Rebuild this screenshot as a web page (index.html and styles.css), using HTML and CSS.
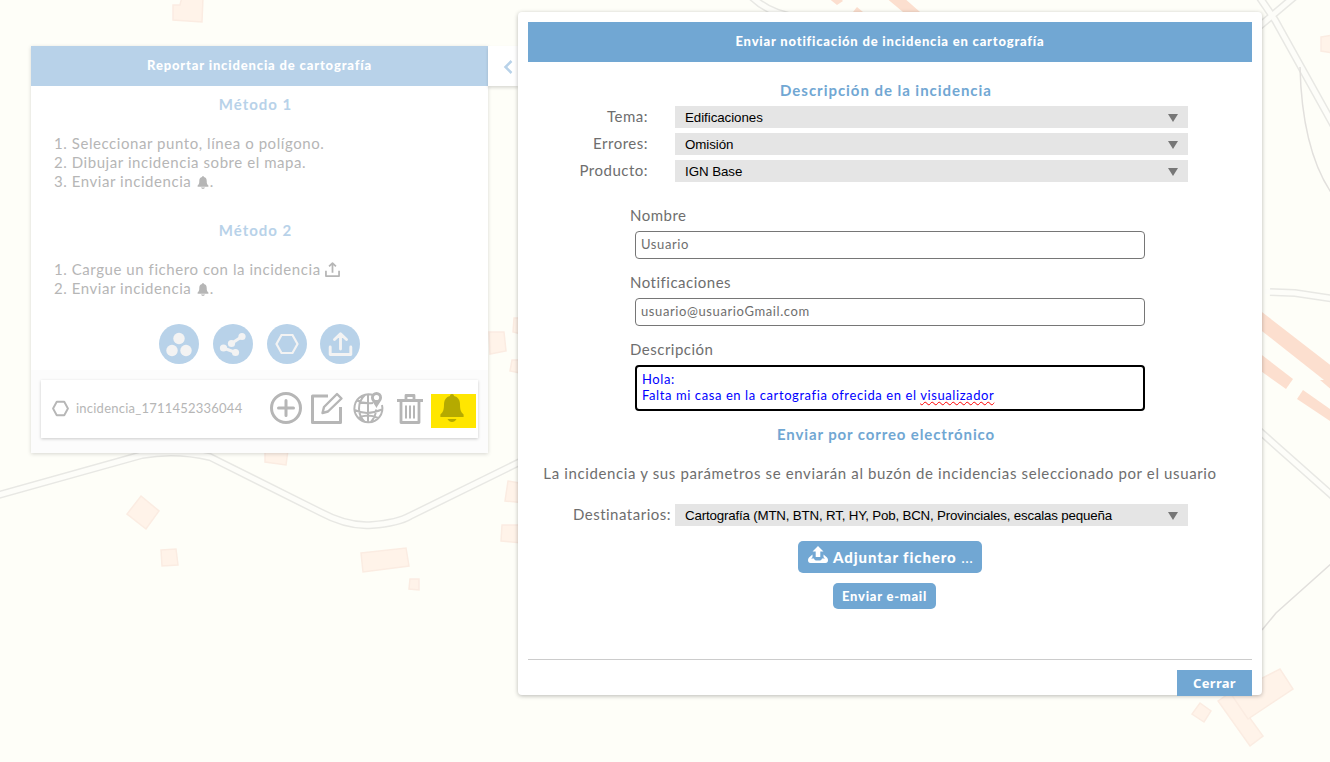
FILE: index.html
```html
<!DOCTYPE html>
<html lang="es">
<head>
<meta charset="utf-8">
<title>Notificación de incidencia en cartografía</title>
<link rel="stylesheet" href="styles.css">
</head>
<body>
<svg class="map" viewBox="0 0 1330 762" aria-hidden="true">
  <g class="road-edge">
    <path d="M-5 496L142 455Q175 449 210 457L320 512Q348 527 372 525Q398 523 410 516L530 457"/>
    <path class="road-fill" d="M-5 496L142 455Q175 449 210 457L320 512Q348 527 372 525Q398 523 410 516L530 457"/>
    <path d="M750 -5Q768 14 800 18"/>
    <path class="road-fill" d="M750 -5Q768 14 800 18"/>
    <path d="M1255 30L1300 -8M1258 -5L1275 20L1335 128"/>
    <path class="road-fill" d="M1255 30L1300 -8M1258 -5L1275 20L1335 128"/>
    <path d="M1270 292L1295 293L1335 299M1255 427L1335 498"/>
    <path class="road-fill" d="M1265 292L1295 293L1335 299M1255 427L1335 498"/>
  </g>
  <path class="trail" d="M1300 67Q1302 150 1332 194M1262 630L1276 613L1332 563"/>
  <g class="house">
    <path d="M173 5L180 5L182 -3L203 -3L202 22L173 20Z"/>
    <path d="M141 496L159 511L146 529L127 514Z"/>
    <path d="M161 550L176 549L178 565L162 566Z"/>
    <path d="M361 553L406 548L409 566L363 572Z"/>
    <path d="M410 579L419 579L419 590L409 589Z"/>
    <path d="M265 450L288 450L286 465L265 462Z"/>
    <path d="M508 481L525 484L525 503L505 501Z"/>
    <path d="M502 525L522 525L522 543L501 541Z"/>
    <path d="M489 332L504 332L506 351L490 354Z"/>
    <path d="M514 318L525 318L525 335L513 332Z"/>
    <path d="M512 360L525 360L525 374L510 371Z"/>
    <path d="M1200 703L1211 711L1204 722L1192 714Z"/>
    <path d="M1218 701L1231 692L1263 736L1250 746Z"/>
    <path d="M1231 694L1280 669L1293 689L1248 719Z"/>
    <path d="M1321 37L1333 35L1333 53L1321 51Z"/>
  </g>
  <g class="block">
    <path d="M827 -3L839 -3L843 1L837 5Z"/>
    <path d="M857 7L863 12L853 12Z"/>
    <path d="M885 -3L903 -3L920 12L903 12Z"/>
    <path d="M1258 309L1333 367L1333 387L1258 328Z"/>
    <path d="M1258 352L1293 379L1286 389L1258 369Z"/>
    <path d="M1303 390L1333 411L1333 423L1297 399Z"/>
    <path d="M1320 380L1333 380L1333 391Z"/>
  </g>
</svg>

<svg class="defs" aria-hidden="true">
  <symbol id="bell" viewBox="0 0 24 28">
    <path d="M12 0c-1.200 0-2 .8-2 2C6 3 4 6 4 10.500C4 16 3 18 .4 20.500V23h23.200v-2.500C21 18 20 16 20 10.500C20 6 18 3 14 2c0-1.200-.8-2-2-2ZM7.500 25h9c-1 2-2.700 3-4.500 3s-3.500-1-4.500-3Z" fill="currentColor"/>
  </symbol>
  <symbol id="upload" viewBox="0 0 24 24">
    <path d="M1.500 14v8.500h21V14M12 17V2M6.500 7L12 1.700L17.500 7" fill="none" stroke="currentColor" stroke-width="2.800" stroke-linejoin="round"/>
  </symbol>
  <symbol id="hexagon" viewBox="0 0 24 24">
    <path d="M6.700 2.500h10.600L22.500 12l-5.200 9.500H6.700L1.500 12Z" fill="none" stroke="currentColor" stroke-width="2.700" stroke-linejoin="round"/>
  </symbol>
</svg>

<main class="workspace">
  <section class="panel">
    <h2 class="panel-title">Reportar incidencia de cartografía</h2>
    <div class="methods">
      <h3 class="method-title">Método 1</h3>
      <ol class="steps steps-first">
        <li>1. Seleccionar punto, línea o polígono.</li>
        <li>2. Dibujar incidencia sobre el mapa.</li>
        <li>3. Enviar incidencia <svg class="mini-bell"><use href="#bell"/></svg>.</li>
      </ol>
      <h3 class="method-title">Método 2</h3>
      <ol class="steps">
        <li>1. Cargue un fichero con la incidencia <svg class="mini-upload"><use href="#upload"/></svg></li>
        <li>2. Enviar incidencia <svg class="mini-bell"><use href="#bell"/></svg>.</li>
      </ol>
      <div class="tools">
        <button class="tool"><svg viewBox="0 0 40 40"><g fill="currentColor"><circle cx="20" cy="14.500" r="5.700"/><circle cx="13" cy="26.500" r="5.700"/><circle cx="27" cy="26.500" r="5.700"/></g></svg></button>
        <button class="tool"><svg viewBox="0 0 40 40"><path d="M29 12.500L18.500 19.500M10.500 24L22.500 28.500" stroke="currentColor" stroke-width="3"/><g fill="currentColor"><circle cx="29" cy="12.500" r="3.600"/><circle cx="18.500" cy="19.500" r="3.600"/><circle cx="10.500" cy="24" r="3.600"/><circle cx="22.500" cy="28.500" r="3.600"/></g></svg></button>
        <button class="tool"><svg viewBox="0 0 40 40"><path d="M14.500 11h11L30.500 20l-5 9h-11L9.500 20Z" fill="none" stroke="currentColor" stroke-width="2.200"/></svg></button>
        <button class="tool"><svg viewBox="0 0 40 40"><path d="M10.200 23v7.500h20.600V23M20.500 25V10M14.500 15.500l6-5.800l6 5.800" fill="none" stroke="currentColor" stroke-width="2.900" stroke-linejoin="round" stroke-linecap="round"/></svg></button>
      </div>
    </div>
    <div class="layers">
      <div class="layer">
        <svg class="layer-shape"><use href="#hexagon"/></svg>
        <span class="layer-name">incidencia_1711452336044</span>
        <svg class="layer-actions" viewBox="0 0 210 40">
          <g fill="none" stroke="currentColor" stroke-width="3">
            <circle cx="20" cy="18" r="14.500"/>
            <path d="M20 10.500v15M12.500 18h15" stroke-linecap="round"/>
            <path d="M62 6H46.500v26.500h28V17" stroke-width="3" stroke-linejoin="round"/>
            <path d="M56.500 23l1.500-6L71 4l4.500 4.500L62 21.500Z" stroke-width="2.400" stroke-linejoin="round"/>
            <g stroke-width="2">
              <path d="M108 5.500A14 14 0 1 0 116 15M102 4.500v28M99 5C91 12 91 25 99 32M105 32Q110 26 110 19.500M91 10.500Q98 14 107 13M88.500 20Q101 26 116 19.500M92 28Q102 23 112 28"/>
            </g>
            <path d="M131 10.500h26M135 12v20.500h18V12M140 9V5.500h8V9" stroke-linejoin="round" stroke-width="2.800"/>
            <path d="M140 15.500v13M144 15.500v13M148 15.500v13" stroke-width="2"/>
          </g>
          <path d="M110.500 18C107.500 12.500 105 10.500 105 7.500a5.500 5.500 0 0 1 11 0C116 10.500 113.500 12.500 110.500 18Z" fill="currentColor"/>
          <circle class="pin-hole" cx="110.500" cy="7.500" r="2.600"/>
        </svg>
        <button class="notify"><svg class="notify-bell"><use href="#bell"/></svg></button>
      </div>
    </div>
  </section>
  <button class="collapse"><svg viewBox="0 0 10 16"><path d="M8.500 2L2.500 8l6 6" fill="none" stroke="currentColor" stroke-width="2.500"/></svg></button>

  <section class="dialog">
    <h2 class="dialog-title">Enviar notificación de incidencia en cartografía</h2>
    <form class="form">
      <h3 class="section-title">Descripción de la incidencia</h3>
      <div class="row"><label class="row-label">Tema:</label><div class="select">Edificaciones<i class="caret"></i></div></div>
      <div class="row"><label class="row-label">Errores:</label><div class="select">Omisión<i class="caret"></i></div></div>
      <div class="row"><label class="row-label">Producto:</label><div class="select">IGN Base<i class="caret"></i></div></div>
      <div class="fields">
        <label class="field-label">Nombre</label>
        <div class="input">Usuario</div>
        <label class="field-label">Notificaciones</label>
        <div class="input">usuario@usuarioGmail.com</div>
        <label class="field-label">Descripción</label>
        <div class="textarea">Hola:<br>Falta mi casa en la cartografia ofrecida en el <span class="misspelled">visualizador</span></div>
      </div>
      <h3 class="section-title mail-title">Enviar por correo electrónico</h3>
      <p class="note">La incidencia y sus parámetros se enviarán al buzón de incidencias seleccionado por el usuario</p>
      <div class="row recipients"><label class="row-label">Destinatarios:</label><div class="select select-long">Cartografía (MTN, BTN, RT, HY, Pob, BCN, Provinciales, escalas pequeña<i class="caret"></i></div></div>
      <div class="buttons">
        <button type="button" class="btn attach"><svg viewBox="0 0 20 18"><path d="M10 0l5.500 5.500h-3.200V11H7.700V5.500H4.500ZM4.500 8.500L1 11.500Q0 12.500 0 14q0 3 2.500 3h15q2.500 0 2.500-3q0-1.500-1-2.500l-3.500-3v2.800l1.500 1.200h-3q-.5 2-2 2h-4q-1.500 0-2-2H3l1.500-1.200Z" fill="currentColor"/></svg><span>Adjuntar fichero <span class="dots">...</span></span></button>
        <button type="button" class="btn send">Enviar e-mail</button>
      </div>
    </form>
    <footer class="dialog-foot"><button class="close">Cerrar</button></footer>
  </section>
</main>
</body>
</html>
```
FILE: styles.css
```css
* { box-sizing: border-box; }
body {
  margin: 0;
  height: 762px;
  overflow: hidden;
  background: #fefef8;
  font: 15px/19px Lato, sans-serif;
  letter-spacing: .5px;
  color: #6e6e6e;
}
h2, h3, p, ol { margin: 0; padding: 0; font-weight: 700; }
button { border: 0; padding: 0; font: inherit; letter-spacing: inherit; color: inherit; background: none; }
svg { display: block; }
.defs { position: absolute; width: 0; height: 0; }

.map { position: absolute; inset: 0; width: 1330px; height: 762px; filter: blur(.6px); }
.road-edge path { fill: none; stroke: #e8e8e4; stroke-width: 8; }
.road-edge .road-fill { stroke: #fdfdf9; stroke-width: 5; }
.trail { fill: none; stroke: #e2e0dd; stroke-width: 1.5; }
.house { fill: #fff3e9; stroke: #fbece2; stroke-width: 1.5; }
.block { fill: #fcdfcf; }

.workspace { position: relative; display: flex; align-items: flex-start; padding-left: 31px; }

.panel {
  width: 457px;
  height: 407px;
  margin-top: 46px;
  background: #fff;
  color: #b6b6b6;
  box-shadow: 0 1px 4px rgba(0, 0, 0, .16);
}
.panel-title {
  height: 40px;
  background: #b8d2e9;
  color: #fff;
  text-align: center;
  font-size: 13px;
  font-weight: 900;
  letter-spacing: .84px;
  line-height: 39px;
}
.methods { height: 284px; padding-top: 9px; }
.method-title { width: 449px; height: 39px; text-align: center; font-size: 15px; letter-spacing: 1px; color: #b8d2e9; }
.steps { list-style: none; font-weight: 400; padding-left: 23px; height: 64px; letter-spacing: .56px; }
.steps-first { height: 87px; }
.mini-bell, .mini-upload { display: inline-block; width: 12px; height: 13px; margin: 0 1px; vertical-align: -2px; }
.mini-upload { width: 15px; height: 15px; margin: 0; }
.methods .steps:not(.steps-first) { margin-bottom: 0; }
.tools { display: flex; gap: 14px; padding-left: 128px; }
.tool:last-child { margin-left: -1px; }
.tool { width: 40px; height: 40px; border-radius: 50%; background: #b8d2e9; color: #f3f3f3; }
.layers { height: 83px; padding: 10px; background: #fcfcfc; }
.layer {
  display: flex;
  align-items: center;
  width: 437px;
  height: 58px;
  background: #fff;
  box-shadow: 0 1px 3px rgba(0, 0, 0, .2);
}
.layer-shape { width: 17px; height: 17px; flex: none; margin: -1px 0 0 11px; }
.layer-name { flex: none; width: 184px; margin: -2px 0 0 7px; font-size: 13px; letter-spacing: .23px; white-space: nowrap; }
.layer-actions { width: 210px; height: 40px; margin: 2px -39px 0 6px; flex: none; }
.layer-actions { margin-left: 6px; margin-right: -45px; }
.layer-actions + .notify { margin-left: auto; }
.pin-hole { fill: #fff; }
.notify {
  display: flex;
  justify-content: center;
  flex: none;
  width: 45px;
  height: 34px;
  margin-top: 4px;
  margin-right: 2px;
  background: #ffe600;
  color: #b5aa00;
}
.notify-bell { width: 24px; height: 28px; margin-left: -4px; }

.collapse {
  width: 30px;
  height: 40px;
  margin-top: 46px;
  padding: 1px 0 0 15px;
  background: #fff;
  color: #b8d2e9;
  box-shadow: 0 2px 3px rgba(0, 0, 0, .14);
}
.collapse svg { width: 10px; height: 16px; }

.dialog {
  width: 744px;
  height: 683px;
  margin-top: 12px;
  padding: 10px 10px 0;
  border-radius: 4px;
  background: #fff;
  box-shadow: 0 1px 4px rgba(0, 0, 0, .28);
}
.dialog-title {
  height: 40px;
  background: #71a7d3;
  color: #fff;
  text-align: center;
  font-size: 13px;
  font-weight: 900;
  letter-spacing: .8px;
  line-height: 39px;
}
.form { height: 597px; padding-top: 19px; }
.section-title { width: 716px; height: 25px; text-align: center; font-size: 15px; letter-spacing: .96px; color: #71a7d3; }
.row { display: flex; height: 22px; margin-bottom: 5px; }
.row-label { width: 120px; margin-right: 27px; text-align: right; line-height: 21px; }
.select {
  display: flex;
  align-items: center;
  justify-content: space-between;
  width: 513px;
  height: 22px;
  padding: 1px 10px 0;
  background: #e5e5e5;
  color: #000;
  font: 13.333px/20px "Liberation Sans", Arial, sans-serif;
  letter-spacing: -.06px;
}
.select-long { letter-spacing: -.18px; }
.caret { border: 5px solid transparent; border-top: 8px solid #777; border-bottom: 0; }
.fields { width: 515px; margin-left: 102px; padding-top: 19px; }
.field-label { display: block; height: 25px; line-height: 18px; }
.input {
  height: 28px;
  margin: 0 0 14px 5px;
  padding: 0 5px;
  border: 1px solid #767676;
  border-radius: 4px;
  font-size: 13px;
  letter-spacing: .6px;
  line-height: 25px;
}
.textarea {
  height: 46px;
  margin-left: 5px;
  padding: 4px 5px;
  border: 2px solid #000;
  border-radius: 4px;
  font-size: 13px;
  letter-spacing: .59px;
  line-height: 16px;
  color: #00f;
}
.misspelled { text-decoration: underline wavy #f00 1px; text-underline-offset: 1px; text-decoration-skip-ink: none; }
.mail-title { margin-top: 14px; height: 39px; letter-spacing: .88px; }
.note { width: 744px; margin-left: -20px; text-align: center; font-weight: 400; letter-spacing: .63px; white-space: nowrap; }
.recipients { margin-top: 21px; margin-bottom: 15px; }
.recipients .row-label { width: 143px; margin-right: 4px; }
.buttons { display: flex; flex-direction: column; align-items: center; gap: 10px; width: 724px; }
.btn { background: #71a7d3; color: #fff; border-radius: 5px; font-weight: 900; }
.attach { display: flex; align-items: center; width: 184px; height: 32px; padding: 0 10px; gap: 5px; font-size: 15px; letter-spacing: .9px; white-space: nowrap; }
.attach svg { width: 20px; height: 18px; margin-top: -5px; flex: none; }
.dots { font-weight: 400; letter-spacing: .5px; }
.send { width: 103px; height: 26px; margin-right: 11px; font-size: 13px; letter-spacing: .75px; }
.dialog-foot { display: flex; justify-content: flex-end; height: 37px; padding-top: 10px; border-top: 1px solid #ccc; }
.close {
  width: 75px;
  height: 26px;
  background: #71a7d3;
  color: #fff;
  font: 700 13px "Noto Sans", sans-serif;
  letter-spacing: .3px;
}
```
